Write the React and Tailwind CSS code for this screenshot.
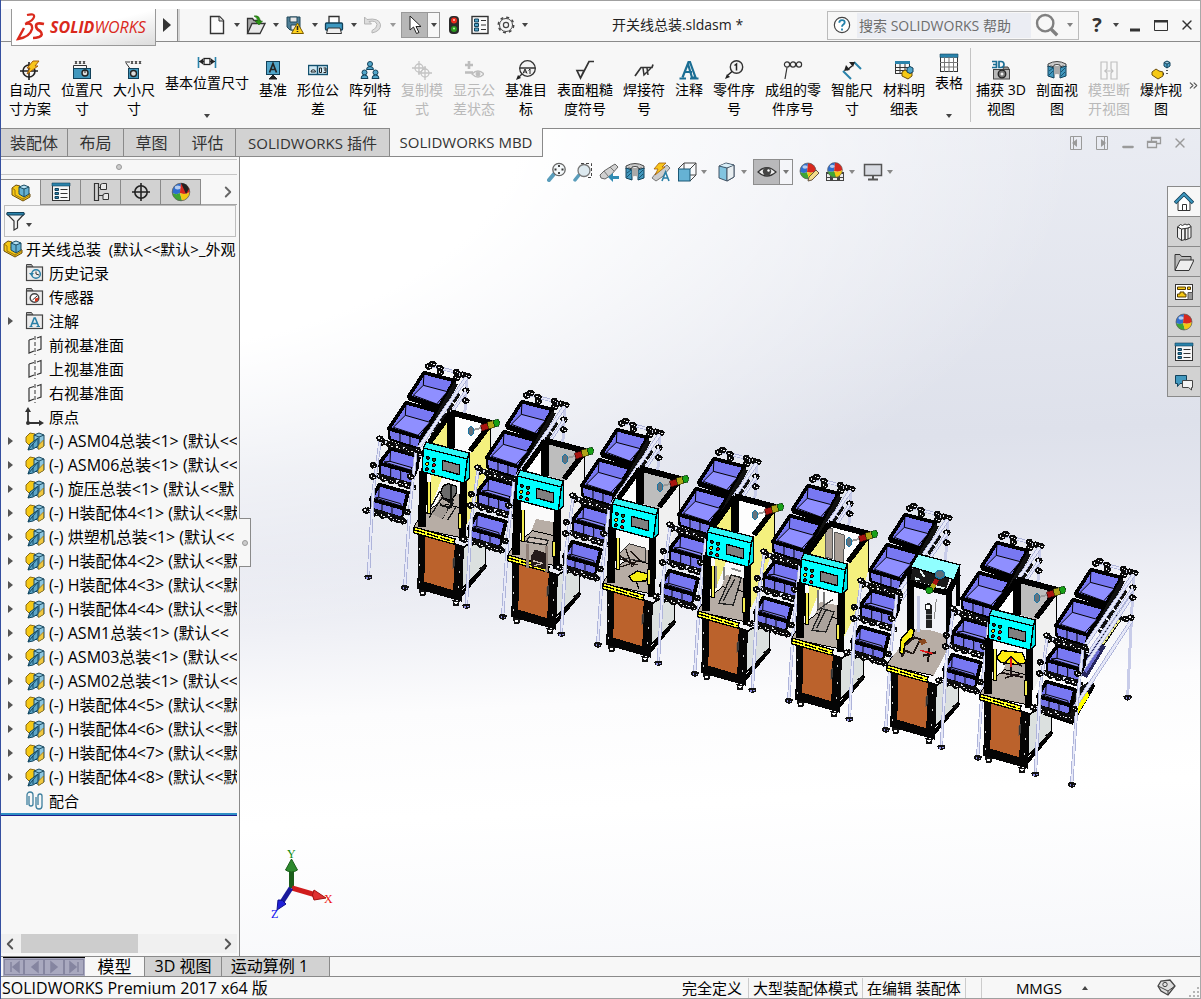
import { ChevronLeft, ChevronRight, ChevronsRight, Minus, X } from 'lucide-react';

const Svg = ({ children, className = 'size-5', box = '0 0 20 20' }) => (
    <svg viewBox={box} className={`shrink-0 ${className}`} fill="none" aria-hidden="true">
        {children}
    </svg>
);

const Caret = ({ className = 'text-[#444]' }) => (
    <svg viewBox="0 0 6 4" className={`h-1 w-1.5 shrink-0 ${className}`} aria-hidden="true">
        <path d="M0 0h6L3 4z" fill="currentColor" />
    </svg>
);

/* ---------- icons ---------- */

const Ball = ({ cx = 10, cy = 10, r = 8 }) => (
    <g transform={`translate(${cx} ${cy}) scale(${r / 8})`}>
        <path d="M0-8A8 8 0 0 0-8 1Q-4 3-1 1Z" fill="#2f6fd0" />
        <path d="M0-8A8 8 0 0 1 8 0Q4 3-1 1Z" fill="#d8281e" />
        <path d="M-8 1Q-4 3-1 1L1 8A8 8 0 0 1-8 1Z" fill="#3fa535" />
        <path d="M8 0Q4 3-1 1L1 8A8 8 0 0 0 8 0Z" fill="#f3c713" />
        <ellipse cx="-3" cy="-4" rx="2.6" ry="1.8" fill="#fff" opacity=".65" />
        <circle r="8" stroke="#5b5b5b" strokeWidth=".7" />
    </g>
);

const AssemblyIcon = ({ className }) => (
    <Svg className={className}>
        <path d="M1 5l4-3 4 1v4l-1 2 2 1 4-1 5 2v3l-7 4-11-6z" fill="#f6c915" stroke="#6b4d0c" />
        <path d="M1 5l3 2v5l8 4 7-4M12 16v2" stroke="#9b7410" />
        <path d="M8 4l5-2 5 2v7l-5 3-5-3z" fill="#64b1d3" stroke="#1c4a60" />
        <path d="M8 4l5 2 5-2M13 6v8" stroke="#1c4a60" />
        <path d="M9.500 4L13 2.700 16.500 4 13 5.300z" fill="#bfe3f1" />
    </Svg>
);

const ComponentIcon = () => (
    <Svg>
        <path d="M1 6l4-4 5 1 2 4-2 9-6-2-3-3z" fill="#f6c915" stroke="#8a6a14" />
        <path d="M9 4l5-2 5 2v11l-5 3-5-3z" fill="#8cc6df" stroke="#1c4a60" />
        <path d="M9 4l5 2 5-2M14 6v8" stroke="#1c4a60" />
        <path d="M18.500 9v6.500l-5 3-.500-4z" fill="#f0c840" stroke="#8a6a14" strokeWidth=".7" />
        <path d="M3 19l2-6 8-6v8l-5 3z" fill="#5fa8c9" stroke="#0f4560" />
        <path d="M3 19l9.500-11.500M8 13v4" stroke="#0f4560" />
    </Svg>
);

const ListIcon = () => (
    <Svg>
        <rect x="1.500" y="1.500" width="17" height="17" fill="#f7f7f7" stroke="#333" />
        <path d="M1 1h18v3H1z" fill="#2a83ab" stroke="#12415a" strokeWidth=".6" />
        <path d="M4 6.500h3.500v2H4zM4 10.500h3.500v2H4zM4 14.500h3.500v2H4z" fill="#2a83ab" stroke="#12415a" />
        <path d="M9.500 7.500h7M9.500 11.500h7M9.500 15.500h7" stroke="#333" />
    </Svg>
);

const FolderFrame = ({ children }) => (
    <Svg>
        <path d="M1.500 4V1.500h5L8 4z" fill="#b5b5b5" stroke="#444" />
        <rect x="1.500" y="4" width="16" height="13.500" fill="#ececec" stroke="#444" strokeWidth="1.200" />
        {children}
    </Svg>
);

const TreeIcon = {
    history: () => (
        <FolderFrame>
            <circle cx="11" cy="11" r="4.300" stroke="#2a7fa6" strokeWidth="1.500" />
            <path d="M11 8.500V11l3 1" stroke="#333" />
            <path d="M4 10h5l-2.500 3z" fill="#2a7fa6" />
        </FolderFrame>
    ),
    sensor: () => (
        <FolderFrame>
            <circle cx="9.500" cy="11" r="4.300" fill="#fff" stroke="#444" strokeWidth="1.400" />
            <path d="M10 11.500l3.500-1-.500 3-3 1.500z" fill="#d8361e" />
            <path d="M7.500 13L12 9" stroke="#333" />
        </FolderFrame>
    ),
    notes: () => (
        <FolderFrame>
            <path d="M6 15L9.200 7h1L13.500 15M7.500 12.500h4.500" stroke="#2a7fa6" strokeWidth="1.600" />
            <path d="M4.500 15.500h3M11.500 15.500H15" stroke="#2a7fa6" />
        </FolderFrame>
    ),
    plane: () => (
        <Svg>
            <path d="M4 5l5-1.500M12 3l4-1.500V14l-4 1.500M9 16l-5 2V5" stroke="#333" strokeWidth="1.200" />
            <path d="M10 1v19" stroke="#333" strokeDasharray="4 2" />
        </Svg>
    ),
    origin: () => (
        <Svg>
            <path d="M3 16V3M3 16h14" stroke="#333" strokeWidth="1.800" />
            <path d="M3 0l3 5H0zM19 16l-5-3v6z" fill="#333" />
            <circle cx="3" cy="16" r="2" fill="#333" />
        </Svg>
    ),
    mates: () => (
        <Svg>
            <path d="M2 14V4a3 3 0 0 1 6 0v9a2 2 0 0 1-4 0V5" stroke="#3d7f9e" strokeWidth="1.300" />
            <path d="M11 6v9a3 3 0 0 0 6 0V5a2 2 0 0 0-4 0v9" stroke="#3d7f9e" strokeWidth="1.300" />
        </Svg>
    ),
    part: ComponentIcon,
};

const Target = ({ color = '#222' }) => (
    <g stroke={color} strokeWidth="1.600">
        <circle cx="10" cy="10" r="6.200" />
        <path d="M10 1v18M1 10h18" />
    </g>
);

const SectionIcon = () => (
    <Svg>
        <path d="M1 4q9-5 18 0v3q-3-2-6 0V5Q10 4 7 5v2Q4 5 1 7z" fill="#c9c9c9" stroke="#444" />
        <path d="M1 6l6 2v10l-6-2zM13 8l6-2v10l-6 2z" fill="#4298be" stroke="#12415a" />
        <path d="M2 11l4-3M2 15l4-4M14 12l4-4M14 16l4-4" stroke="#12415a" strokeWidth=".8" />
        <path d="M7 6h6v9q-3-2-6 0z" fill="#aaa" />
    </Svg>
);

const ribbonIcons = {
    auto: (
        <>
            <circle cx="9" cy="11" r="6" stroke="#222" strokeWidth="1.600" />
            <path d="M9 2v18M0 11h18" stroke="#222" strokeWidth="1.600" />
            <path d="M13 1h6l-4 5h3L7 14l3-6H7z" fill="#f8c51c" stroke="#a55d0a" />
        </>
    ),
    pos: (
        <>
            <path d="M3 1l2 3M5 1L3 4M7 1l2 3M9 1L7 4M11 1l2 3M13 1l-2 3" stroke="#333" />
            <path d="M1.500 8V5.500h13V11" stroke="#333" />
            <rect x="1.500" y="8.500" width="17" height="10" fill="#4298be" stroke="#12415a" />
            <circle cx="13" cy="13" r="3" fill="#ddd" stroke="#222" strokeWidth="1.400" />
            <path d="M13 10v3" stroke="#222" />
        </>
    ),
    size: (
        <>
            <path d="M7 1l2 3M9 1L7 4M11 1l2 3M13 1l-2 3M15 1l2 3M17 1l-2 3" stroke="#333" />
            <path d="M2 3l5 7M1 2h5" stroke="#333" />
            <rect x="4.500" y="8.500" width="10" height="10" fill="#4298be" stroke="#12415a" />
            <circle cx="9.500" cy="13.500" r="3" fill="#ddd" stroke="#222" strokeWidth="1.400" />
        </>
    ),
    basic: (
        <>
            <path d="M1.500 4v11M18.500 4v11" stroke="#2a83ab" strokeWidth="1.600" />
            <path d="M2 8.500h16" stroke="#222" />
            <path d="M2 8.500l4-3v6zM18 8.500l-4-3v6z" fill="#222" />
            <rect x="7" y="5.500" width="6" height="6" fill="#f7f7f7" stroke="#222" strokeWidth="1.300" />
        </>
    ),
    datum: (
        <>
            <rect x="3.500" y="1.500" width="13" height="13" fill="#52a6ca" stroke="#12415a" />
            <path d="M6.500 12.500l3.500-9 3.500 9M8 9.500h4" stroke="#222" strokeWidth="1.700" />
            <path d="M10 15v2M6 19h8l-4-4z" fill="#222" stroke="#222" />
        </>
    ),
    tol: (
        <>
            <rect x=".5" y="5.500" width="19" height="9" fill="#cfe8f3" stroke="#12506e" strokeWidth="1.400" />
            <path d="M9.500 5.500v9" stroke="#12506e" strokeWidth="1.400" />
            <path d="M3 12h4.500a2.200 2.200 0 0 0-4.500 0z" stroke="#222" />
            <path d="M11.500 8v4.500h2V8zM15.500 8H18v4.500h-2.500M16 10h2" stroke="#222" />
        </>
    ),
    pattern: (
        <g fill="#52a6ca" stroke="#12415a">
            <circle cx="10" cy="4" r="2.500" />
            <path d="M6.500 9.500q0-3 3.500-3t3.500 3z" />
            <circle cx="4.500" cy="12.500" r="2.500" />
            <path d="M1 18.500q0-3.500 3.500-3.500T8 18.500z" />
            <circle cx="15.500" cy="12.500" r="2.500" />
            <path d="M12 18.500q0-3.500 3.500-3.500t3.500 3.500z" />
        </g>
    ),
    scheme: (
        <g stroke="#c4c4c4" strokeWidth="1.300">
            <circle cx="7" cy="8" r="4" />
            <path d="M7 1v14M0 8h14" />
            <circle cx="13" cy="13" r="4" />
            <path d="M13 6v14M6 13h14" />
        </g>
    ),
    status: (
        <g stroke="#bdbdbd">
            <path d="M5 1v8M1 5h8M1 12.500h8" strokeWidth="2.600" />
            <path d="M8 14q6-6 12 0-6 6-12 0z" strokeWidth="1.300" />
            <circle cx="14" cy="14" r="2" fill="#bdbdbd" />
        </g>
    ),
    target: (
        <>
            <circle cx="11.500" cy="8.500" r="7.800" fill="#f2f2f2" stroke="#333" strokeWidth="1.300" />
            <path d="M3.500 8h16M6 14l-4 4" stroke="#333" strokeWidth="1.400" />
            <path d="M7 13.500l2-4.500 2 4.500M8 12h2.400M12.500 10.500L14 9v5" stroke="#222" />
            <path d="M0 20l2-5 3 3z" fill="#222" />
        </>
    ),
    rough: <path d="M2 10.500h7L5.500 18zM5.500 18L14 1.500h5" stroke="#333" strokeWidth="1.700" />,
    weld: (
        <>
            <path d="M1 16L7 7.500h11L19 4.500" stroke="#333" strokeWidth="1.700" />
            <path d="M9 8l1 7 7-7M13 8l1 7" stroke="#333" strokeWidth="1.500" />
        </>
    ),
    note: (
        <>
            <path d="M3.500 17.500L9.500 2h1.500l5.500 15.500h-3.500L9 4M6 12h7" stroke="#1b6e94" strokeWidth="2.200" />
            <path d="M.500 18.500h6.500M11 18.500h8.500" stroke="#1b6e94" strokeWidth="2" />
        </>
    ),
    balloon: (
        <>
            <circle cx="12.500" cy="7" r="6.200" fill="#f2f2f2" stroke="#333" strokeWidth="1.400" />
            <path d="M10.500 5.500l2-1.500v6.500M8 11.500L4 15" stroke="#222" strokeWidth="1.500" />
            <path d="M1 19l2-5 3 3z" fill="#222" />
        </>
    ),
    stacked: (
        <g stroke="#333" strokeWidth="1.200">
            <circle cx="4" cy="4.500" r="2.600" />
            <circle cx="10" cy="4.500" r="2.600" />
            <circle cx="16" cy="4.500" r="2.600" />
            <path d="M4 7.500L2 19" />
        </g>
    ),
    smart: (
        <>
            <path d="M12 2l7 7M1 11l8 8" stroke="#2a83ab" strokeWidth="2" />
            <path d="M5 10l5-4" stroke="#222" strokeWidth="1.600" />
            <path d="M2 11l2-6 4 5zM13 2L7 2l4 5z" fill="#222" />
        </>
    ),
    bom: (
        <>
            <rect x="1.500" y="1.500" width="14" height="12" fill="#f7f7f7" stroke="#333" />
            <path d="M1 1h15v3H1z" fill="#2a83ab" />
            <path d="M1 7.500h14M1 10.500h14M6 4v9M11 4v9" stroke="#333" />
            <path d="M8 12l3-2 7 3v3l-4 3-6-3z" fill="#f6c915" stroke="#6b4d0c" />
            <path d="M13 8l3-1.500L19 8v4l-3 1.500-3-1.500z" fill="#52a6ca" stroke="#12415a" />
        </>
    ),
    table: (
        <>
            <rect x="1.500" y="1.500" width="17" height="17" fill="#fff" stroke="#333" />
            <path d="M1 1h18v3.500H1z" fill="#2a83ab" stroke="#12415a" strokeWidth=".6" />
            <path d="M1 9.500h18M1 14h18M5.500 4v15M10 4v15M14.500 4v15" stroke="#777" />
        </>
    ),
    capture: (
        <>
            <path d="M1 1.500h4.500v6H1M2 4.500h3.500M8 1.500h2q3 0 3 3t-3 3H8z" stroke="#1b6e94" strokeWidth="1.700" />
            <rect x="2.500" y="9.500" width="16" height="9.500" fill="#b9b9b9" stroke="#444" />
            <path d="M12 9l1-2h4l1 2" fill="#999" stroke="#444" />
            <circle cx="11" cy="14" r="3.800" fill="#777" stroke="#222" strokeWidth="1.300" />
            <circle cx="11" cy="14" r="1.500" fill="#eee" />
        </>
    ),
    broken: (
        <path d="M2 2h6v7l-2 2 2 2v6H2zM18 2h-6v7l2 2-2 2v6h6zM5 11h9" stroke="#c0c0c0" strokeWidth="1.200" />
    ),
    explode: (
        <>
            <path d="M1 12l4-3 3 2 4 1v4l-5 3-6-4z" fill="#f6c915" stroke="#6b4d0c" />
            <path d="M13 2.500l3-1.500 3 1.500V6l-3 2-3-2zM13 2.500L16 4l3-1.500M16 4v4" fill="#52a6ca" stroke="#12415a" />
            <path d="M16 10v1M16 13v1M13 14h-1" stroke="#222" strokeWidth="1.500" />
        </>
    ),
};

/* ---------- data ---------- */

const ribbonLeft = [
    { icon: 'auto', lines: ['自动尺', '寸方案'], w: 'w-[52px]' },
    { icon: 'pos', lines: ['位置尺', '寸'], w: 'w-[52px]' },
    { icon: 'size', lines: ['大小尺', '寸'], w: 'w-[52px]' },
    { icon: 'basic', lines: ['基本位置尺寸'], w: 'w-[94px]', menu: true },
    { icon: 'datum', lines: ['基准'], w: 'w-[38px]' },
    { icon: 'tol', lines: ['形位公', '差'], w: 'w-[52px]' },
    { icon: 'pattern', lines: ['阵列特', '征'], w: 'w-[52px]' },
    { icon: 'scheme', lines: ['复制模', '式'], w: 'w-[52px]', off: true },
    { icon: 'status', lines: ['显示公', '差状态'], w: 'w-[52px]', off: true },
    { icon: 'target', lines: ['基准目', '标'], w: 'w-[52px]' },
    { icon: 'rough', lines: ['表面粗糙', '度符号'], w: 'w-[66px]' },
    { icon: 'weld', lines: ['焊接符', '号'], w: 'w-[52px]' },
    { icon: 'note', lines: ['注释'], w: 'w-[38px]' },
    { icon: 'balloon', lines: ['零件序', '号'], w: 'w-[52px]' },
    { icon: 'stacked', lines: ['成组的零', '件序号'], w: 'w-[66px]' },
    { icon: 'smart', lines: ['智能尺', '寸'], w: 'w-[52px]' },
    { icon: 'bom', lines: ['材料明', '细表'], w: 'w-[52px]' },
    { icon: 'table', lines: ['表格'], w: 'w-[38px]', menu: true },
];

const ribbonRight = [
    { icon: 'capture', lines: ['捕获 3D', '视图'], w: 'w-[60px]' },
    { icon: 'section', lines: ['剖面视', '图'], w: 'w-[52px]' },
    { icon: 'broken', lines: ['模型断', '开视图'], w: 'w-[52px]', off: true },
    { icon: 'explode', lines: ['爆炸视', '图'], w: 'w-[52px]' },
];

const treeTop = [
    { icon: 'history', label: '历史记录' },
    { icon: 'sensor', label: '传感器' },
    { icon: 'notes', label: '注解', open: true },
    { icon: 'plane', label: '前视基准面' },
    { icon: 'plane', label: '上视基准面' },
    { icon: 'plane', label: '右视基准面' },
    { icon: 'origin', label: '原点' },
];

const parts = [
    { name: 'ASM04总装<1>', state: '(默认<<' },
    { name: 'ASM06总装<1>', state: '(默认<<' },
    { name: '旋压总装<1>', state: '(默认<<默' },
    { name: 'H装配体4<1>', state: '(默认<<默' },
    { name: '烘塑机总装<1>', state: '(默认<<' },
    { name: 'H装配体4<2>', state: '(默认<<默' },
    { name: 'H装配体4<3>', state: '(默认<<默' },
    { name: 'H装配体4<4>', state: '(默认<<默' },
    { name: 'ASM1总装<1>', state: '(默认<<' },
    { name: 'ASM03总装<1>', state: '(默认<<' },
    { name: 'ASM02总装<1>', state: '(默认<<' },
    { name: 'H装配体4<5>', state: '(默认<<默' },
    { name: 'H装配体4<6>', state: '(默认<<默' },
    { name: 'H装配体4<7>', state: '(默认<<默' },
    { name: 'H装配体4<8>', state: '(默认<<默' },
];

/* ---------- title bar ---------- */

const Logo = () => (
    <div className="relative z-10 ml-[10px] flex h-[37px] w-[145px] items-center self-start border border-t-0 border-[#999] bg-linear-to-br from-white via-white to-[#dcdcdc] pl-1">
        <svg viewBox="0 0 32 28" className="h-7 w-8 shrink-0" fill="none" stroke="#da291c" aria-hidden="true">
            <path d="M11 2q8-2 7 2-1 4-8 6" strokeWidth="2.200" />
            <path d="M9 11q8-2 7 5-2 8-14 10L8 15" strokeWidth="2.400" />
            <path d="M28 11q-8-2-8 2 0 3 4 5 4 4-1 6-3 1-6 1" strokeWidth="2.600" />
        </svg>
        <span className="ml-0.5 text-[16px] italic leading-6 text-[#da291c]">
            <b>SOLID</b>WORKS
        </span>
    </div>
);

const MenuTool = ({ label, children, off }) => (
    <div className="flex items-center">
        <button type="button" aria-label={label} className="p-px">
            {children}
        </button>
        <button type="button" aria-label={`${label} 选项`} className="flex w-[17px] justify-center">
            <Caret className={off ? 'text-[#999]' : 'text-[#444]'} />
        </button>
    </div>
);

const TitleBar = () => (
    <header className="border-t border-[#a0a0a0] bg-[#f7f7f7]">
        <div className="h-2 bg-white" />
        <div className="flex h-[33px] items-center border-b border-[#8a8a8a]">
            <Logo />
            <button type="button" aria-label="展开菜单" className="ml-1.5 p-px">
                <Svg className="h-3.5 w-2" box="0 0 8 14">
                    <path d="M0 0l8 7-8 7z" fill="#333" />
                </Svg>
            </button>
            <div className="ml-[5px] h-full w-[3px] border-l border-[#8a8a8a] bg-[#d6d6d6]" />

            <div className="ml-[26px] flex items-center">
                <MenuTool label="新建">
                    <Svg>
                        <path d="M3.500 1.500h9l4 4v13h-13z" fill="#fbfbfb" stroke="#333" strokeWidth="1.400" />
                        <path d="M12 1.500V6h4.500" fill="#ddd" stroke="#333" />
                    </Svg>
                </MenuTool>
                <MenuTool label="打开">
                    <Svg>
                        <path d="M1.500 18V3.500h5L8 5.500h6V9" fill="#aaa" stroke="#333" strokeWidth="1.300" />
                        <path d="M1.500 18.500L6 8.500h13l-5 10z" fill="#e9e9e9" stroke="#333" strokeWidth="1.300" />
                        <path d="M8 1q6-1 6 5h2.500L13 10 9 6h2.500Q12 3 8 1z" fill="#2b9413" stroke="#1c6a0b" strokeWidth=".6" />
                    </Svg>
                </MenuTool>
                <MenuTool label="保存">
                    <Svg>
                        <path d="M2 2h13v13H5l-3-3z" fill="#4e7f97" stroke="#22485a" />
                        <path d="M5 2h7v5H5zM6 10h6v5H6z" fill="#e8e8e8" stroke="#22485a" />
                        <path d="M12.500 8l6 10.500h-12z" fill="#ffd21e" stroke="#7a5b00" />
                        <path d="M12.500 11v4M12.500 16v1" stroke="#222" strokeWidth="1.600" />
                    </Svg>
                </MenuTool>
                <MenuTool label="打印">
                    <Svg>
                        <path d="M5 8V1.500h10V8" fill="#fff" stroke="#333" strokeWidth="1.300" />
                        <rect x="1.500" y="8" width="17" height="7" rx="1" fill="#3d98c0" stroke="#12415a" strokeWidth="1.300" />
                        <path d="M4 13h12l1.500 5.500h-15z" fill="#eee" stroke="#333" />
                    </Svg>
                </MenuTool>
                <MenuTool label="撤消" off>
                    <Svg>
                        <path d="M1.500 2v7h7L6 6.500q7-1.500 8 3 0 4-5 6v2.500Q18 16 17.500 9.500 16 2.500 4 4.500z" fill="#ddd" stroke="#b5b5b5" />
                    </Svg>
                </MenuTool>
            </div>

            <div className="flex h-[26px] border border-[#999]">
                <button type="button" aria-label="选择" className="flex w-[25px] items-center justify-center bg-[#b7b7b7]">
                    <Svg>
                        <path d="M5 1v14l3.500-3 3 6.500 2.500-1-3-6h5z" fill="#fff" stroke="#222" />
                    </Svg>
                </button>
                <button type="button" aria-label="选择 选项" className="flex w-3 items-center justify-center border-l border-[#999]">
                    <Caret />
                </button>
            </div>
            <div className="ml-1 flex items-center gap-[6px]">
                <button type="button" aria-label="重建模型">
                    <Svg>
                        <rect x="5" y="1" width="10" height="18" rx="4" fill="#2b2b2b" />
                        <circle cx="10" cy="5.500" r="3" fill="#ee2b1c" />
                        <circle cx="10" cy="14" r="3" fill="#2a9a1e" />
                        <circle cx="10" cy="5" r="1" fill="#ffd0c8" />
                        <circle cx="10" cy="13.500" r="1" fill="#c4f3b8" />
                    </Svg>
                </button>
                <button type="button" aria-label="文件属性">
                    <Svg>
                        <rect x="2" y="1.500" width="16" height="17" fill="#fafafa" stroke="#333" strokeWidth="1.400" />
                        <path d="M4.500 4h4v3h-4zM4.500 8.500h4v3h-4zM4.500 13h4v3h-4z" fill="#52a6ca" stroke="#12415a" />
                        <path d="M11 5.500h5M11 10h5M11 14.500h5" stroke="#333" />
                    </Svg>
                </button>
                <button type="button" aria-label="设置">
                    <Svg>
                        <circle cx="10" cy="10" r="7.700" stroke="#444" strokeWidth="1.500" strokeDasharray="3 3.050" />
                        <circle cx="10" cy="10" r="6.500" stroke="#444" strokeWidth="1" />
                        <circle cx="10" cy="10" r="2.600" stroke="#444" strokeWidth="1.200" />
                    </Svg>
                </button>
                <Caret />
            </div>

            <h1 className="flex-1 text-center text-[14px] leading-5 text-[#222]">开关线总装.sldasm *</h1>

            <label className="flex h-[29px] w-[252px] items-center border border-[#bbb]">
                <Svg className="ml-[5px] mr-[6px] size-[18px]">
                    <circle cx="10" cy="10" r="8.500" fill="#fff" stroke="#444" strokeWidth="1.300" />
                    <path d="M7 7.500q0-3 3-3t3 2.500q0 1.500-1.500 2.500T10 12M10 14v2" stroke="#2280aa" strokeWidth="2" />
                </Svg>
                <input
                    aria-label="搜索帮助"
                    placeholder="搜索 SOLIDWORKS 帮助"
                    className="h-[25px] w-[174px] bg-[#ebedf3] px-0.5 text-[14px] placeholder:text-[#6d6d6d]"
                />
                <Svg className="ml-1 size-6">
                    <circle cx="8.500" cy="8.500" r="6.800" stroke="#808080" strokeWidth="2" />
                    <path d="M13.500 13.500l5 5" stroke="#808080" strokeWidth="2.800" />
                </Svg>
                <span className="ml-2">
                    <Caret className="text-[#808080]" />
                </span>
            </label>

            <div className="ml-2 mr-[5px] flex items-center text-[#333]">
                <button type="button" className="w-5 text-[20px] font-bold leading-6">?</button>
                <span className="mx-[6px]">
                    <Caret />
                </span>
                <button type="button" aria-label="最小化" className="ml-0.5">
                    <Svg className="size-4" box="0 0 16 16">
                        <path d="M3 13h10" stroke="#333" strokeWidth="3" />
                    </Svg>
                </button>
                <button type="button" aria-label="最大化" className="ml-2.5">
                    <Svg className="size-4" box="0 0 16 16">
                        <path d="M1.500 3.500h13v10h-13z" stroke="#333" />
                        <path d="M1 3h14v2.500H1z" fill="#333" />
                    </Svg>
                </button>
                <button type="button" aria-label="关闭" className="ml-2.5">
                    <X className="size-4" strokeWidth={2} />
                </button>
            </div>
        </div>
    </header>
);

/* ---------- ribbon ---------- */

const RibbonButton = ({ icon, lines, w, menu, off }) => (
    <button
        type="button"
        disabled={off}
        className={`flex h-full shrink-0 flex-col items-center text-[14px] leading-[19px] ${w} ${menu ? 'pt-[11px]' : 'pt-[18px]'} ${off ? 'text-[#b9b9b9]' : 'text-black'}`}
    >
        {icon === 'section' ? <SectionIcon /> : <Svg>{ribbonIcons[icon]}</Svg>}
        {lines.map((line) => (
            <span key={line} className="whitespace-nowrap">
                {line}
            </span>
        ))}
        {menu && (
            <span className="mt-auto pb-[10px]">
                <Caret />
            </span>
        )}
    </button>
);

const Ribbon = () => (
    <div className="flex h-[86px] overflow-hidden bg-[#f7f7f7] pl-[3px]">
        {ribbonLeft.map((item) => (
            <RibbonButton key={item.icon} {...item} />
        ))}
        <div className="my-1.5 ml-0.5 w-px shrink-0 bg-[#c4c4c4]" />
        {ribbonRight.map((item) => (
            <RibbonButton key={item.icon} {...item} />
        ))}
        <button type="button" aria-label="更多命令" className="shrink-0 text-[#555]">
            <ChevronsRight className="size-[13px]" />
        </button>
    </div>
);

const TabRow = () => (
    <nav className="flex h-[29px] text-[15px] leading-6 text-[#333]">
        {['装配体', '布局', '草图', '评估'].map((tab, i) => (
            <button
                key={tab}
                type="button"
                className={`whitespace-nowrap border-y border-r border-[#8a8a8a] bg-[#d2d2d2] text-[16px] ${i === 0 ? 'w-[67px]' : 'w-14'}`}
            >
                {tab}
            </button>
        ))}
        <button type="button" className="w-[154px] whitespace-nowrap border-y border-r border-[#8a8a8a] bg-[#d2d2d2]">
            SOLIDWORKS 插件
        </button>
        <button type="button" className="w-[153px] whitespace-nowrap border-b border-r border-[#8a8a8a] bg-[#f7f7f7]">
            SOLIDWORKS MBD
        </button>
        <div className="flex flex-1 items-center justify-end gap-2.5 border-t border-[#8a8a8a] pr-3 text-[#9a9a9a]">
            <button type="button" aria-label="上一窗口">
                <Svg className="size-4" box="0 0 16 16">
                    <path d="M2.500 1.500h11v13h-11zM5.500 1.500v13" stroke="currentColor" />
                    <path d="M4 8l5-4v8z" fill="currentColor" />
                </Svg>
            </button>
            <button type="button" aria-label="下一窗口">
                <Svg className="size-4" box="0 0 16 16">
                    <path d="M2.500 1.500h11v13h-11zM10.500 1.500v13" stroke="currentColor" />
                    <path d="M12 8L7 4v8z" fill="currentColor" />
                </Svg>
            </button>
            <button type="button" aria-label="最小化文档" className="pt-2">
                <Minus className="size-4" strokeWidth={3.5} />
            </button>
            <button type="button" aria-label="还原文档">
                <Svg className="size-4" box="0 0 16 16">
                    <path d="M5.500 6V2.500h9v6H11M1.500 6.500h9v6h-9z" stroke="currentColor" strokeWidth="1.300" />
                    <path d="M5 3h10M1 7h10" stroke="currentColor" strokeWidth="2" />
                </Svg>
            </button>
            <button type="button" aria-label="关闭文档">
                <X className="size-4" strokeWidth={2} />
            </button>
        </div>
    </nav>
);

/* ---------- feature tree ---------- */

const TreeRow = ({ icon, label, open, wide }) => {
    const Icon = TreeIcon[icon];
    return (
        <li className="flex h-6 items-center whitespace-nowrap pl-[7px]">
            <button type="button" aria-label="展开" className={`w-[17px] shrink-0 ${open ? '' : 'invisible'}`}>
                <Svg className="h-2 w-[5px]" box="0 0 5 8">
                    <path d="M0 0l5 4-5 4z" fill="#555" />
                </Svg>
            </button>
            <Icon />
            <span className={`ml-1 text-black ${wide ? 'text-[16px]' : 'text-[15px]'}`}>{label}</span>
        </li>
    );
};

const panelTabs = [
    { id: 'tree', icon: <AssemblyIcon /> },
    { id: 'props', icon: <ListIcon /> },
    {
        id: 'config',
        icon: (
            <Svg>
                <path d="M3.500 1.500h4v17h-4zM7.500 5.500h4M7.500 13.500h5" stroke="#333" strokeWidth="1.200" />
                <path d="M9.500 2.500l2-1h4v6h-6zM12 12.500l2-1h3.500v6H12z" fill="#e8e8e8" stroke="#333" />
            </Svg>
        ),
    },
    {
        id: 'dim',
        icon: (
            <Svg>
                <Target />
            </Svg>
        ),
    },
    {
        id: 'display',
        icon: (
            <Svg>
                <Ball r={8.8} />
                <path d="M10 1q6 0 8 6l-3 5z" fill="#222" />
            </Svg>
        ),
    },
];

const FeatureTree = () => (
    <aside className="relative flex w-[239px] shrink-0 flex-col border-r border-[#8a8a8a] bg-[#f7f7f7]">
        <div className="mr-[2px] mt-[2px] flex h-4 items-center justify-center border-y border-[#c6c6c6]">
            <span className="size-[6px] rounded-full border border-[#999] bg-[#ccc]" />
        </div>
        <div className="mr-[2px] mt-1 flex h-[26px]">
            {panelTabs.map((tab, i) => (
                <button
                    key={tab.id}
                    type="button"
                    aria-label={tab.id}
                    className={`flex w-10 items-center justify-center border-r border-t border-[#8a8a8a] ${i === 0 ? '' : 'border-b bg-[#d2d2d2]'}`}
                >
                    {tab.icon}
                </button>
            ))}
            <button type="button" aria-label="更多" className="flex flex-1 items-center justify-end border-b border-[#a5a5a5] text-[#666]">
                <ChevronRight className="size-[18px]" strokeWidth={2.5} />
            </button>
        </div>
        <div className="mx-[3px] flex h-8 items-center border border-[#bdbdbd] pl-px">
            <button type="button" aria-label="过滤" className="flex items-end">
                <Svg>
                    <path d="M1 3h17l-6.500 7v7L8 19v-9z" fill="#f3f3f3" stroke="#333" strokeWidth="1.200" />
                    <path d="M1 1.500h17V4H1z" fill="#2a83ab" stroke="#12415a" />
                </Svg>
                <span className="pb-1">
                    <Caret />
                </span>
            </button>
        </div>

        <div className="mr-[2px] overflow-hidden">
            <div className="flex h-6 items-center gap-[3px] whitespace-pre pl-[2px] text-[15px] text-black">
                <AssemblyIcon />
                开关线总装  (默认&lt;&lt;默认&gt;_外观
            </div>
            <ul>
                {treeTop.map((row) => (
                    <TreeRow key={row.label} {...row} />
                ))}
                {parts.map(({ name, state }) => (
                    <TreeRow key={name} icon="part" label={`(-) ${name} ${state}`} open wide />
                ))}
                <TreeRow icon="mates" label="配合" />
            </ul>
            <div className="h-[3px] border-b border-[#1c1c8c] bg-[#2f8fc5]" />
        </div>

        <div className="mb-[3px] mr-[2px] mt-auto flex h-[19px] items-center bg-[#f0f0f0] text-[#555]">
            <ChevronLeft className="size-[18px]" strokeWidth={2.5} />
            <div className="ml-[2px] h-full w-[117px] bg-[#cdcdcd]" />
            <ChevronRight className="ml-auto size-[18px]" strokeWidth={2.5} />
        </div>

        <button
            type="button"
            aria-label="收起面板"
            className="absolute -right-3 top-[361px] z-10 flex h-[49px] w-3 items-center justify-center border border-l-0 border-[#8a8a8a] bg-[#f7f7f7]"
        >
            <span className="size-[6px] rounded-full border border-[#999] bg-[#ccc]" />
        </button>
    </aside>
);

/* ---------- model drawing ---------- */

// Both shapes are drawn at three times their size on screen.
const place = ([x, y]) => `translate(${360 + x} ${350 + y}) scale(.3333)`;

const rackSpots = [[0, 0], [98, 29], [193, 57], [290, 86], [384, 113], [481, 142], [573, 170], [667, 197]];
const stationSpots = [[0, 1], [94, 29], [189, 57], [284, 85], [378, 112], [473, 139], [566, 168]];

const Knob = ({ x, y }) => (
    <g>
        <path d={`M${x - 11} ${y - 6}l8-4 10 2 5 7-4 9-10 2-8-5z`} fill="#0a0a0a" />
        <path d={`M${x - 5} ${y - 4}h4v4h-4zM${x + 2} ${y + 1}h4v3h-4z`} fill="#f4f4f4" />
    </g>
);

const Foot = ({ x, y }) => (
    <g>
        <path d={`M${x - 13} ${y - 4}l7-4h12l7 4-3 8-10 5-10-5z`} fill="#111" />
        <path d={`M${x - 6} ${y - 2}h4v6h-4zM${x + 3} ${y - 1}h4v4h-4z`} fill="#8c8ce0" />
    </g>
);

const Rail = ({ d, w = 12 }) => (
    <>
        <path d={d} stroke="#aeb4da" strokeWidth={w} />
        <path d={d} stroke="#e6e8f8" strokeWidth={w - 5} />
    </>
);

// rim corners clockwise from the back left; drop is the height of the front face
const Crate = ({ a, b, c, d, drop }) => {
    const f = [a[0] - 2, a[1] + 38];
    const g = [b[0] - 22, b[1] + 33];
    return (
        <g stroke="#000" strokeLinejoin="round">
            <path d={`M${d} L${d[0] + 3} ${d[1] + drop} L${c[0] - 6} ${c[1] + drop} L${c}Z`} fill="#7474e8" strokeWidth="7" />
            <path d={`M${c} L${c[0] - 6} ${c[1] + drop} L${b[0] - 4} ${b[1] + drop} L${b}Z`} fill="#111" strokeWidth="5" />
            <path d={`M${a} L${b} L${c} L${d}Z`} fill="#7878f2" strokeWidth="11" />
            <path d={`M${f} L${g} L${c[0] - 8} ${c[1] - 8} L${d[0] + 14} ${d[1] - 4}Z`} fill="#8f8fff" strokeWidth="3" />
            <path d={`M${a} L${f}`} strokeWidth="3" />
            <path d={`M${d[0] + 34} ${d[1] + 10}v${drop}M${d[0] + 64} ${d[1] + 18}v${drop}`} strokeWidth="3" />
        </g>
    );
};

const Roller = ({ x, y, len = 120 }) => (
    <g>
        <path d={`M${x} ${y}l${len} ${len * 0.29}`} stroke="#111" strokeWidth="16" />
        <path d={`M${x} ${y}l${len} ${len * 0.29}`} stroke="#e4e6f6" strokeWidth="8" strokeDasharray="16 7" />
        {[0, 0.25, 0.45, 0.7, 0.85, 1].map((t) => (
            <Knob key={t} x={Math.round(x + len * t)} y={Math.round(y + len * t * 0.29) + 4} />
        ))}
    </g>
);

const topKnobs = [[206, 50], [218, 42], [240, 54], [241, 68], [289, 66], [290, 84], [310, 74], [323, 78], [318, 122], [317, 152]];

const Rack = ({ at, last }) => (
    <g transform={place(at)}>
        <path d="M320 78L302 450" stroke="#c8cce9" strokeWidth="9" />
        {last && (
            <>
                <path d="M50 500L135 528 200 418 190 400" fill="#111" stroke="#000" strokeWidth="8" />
                <path d="M142 484l38-52 7 14-38 60z" fill="#ffff00" />
                <path d="M280 205L215 300" stroke="#111" strokeWidth="22" />
                <path d="M276 218L225 290" stroke="#f1f08a" strokeWidth="10" strokeDasharray="12 3" />
                <path d="M222 290L165 385" stroke="#26265c" strokeWidth="34" />
                <path d="M216 310L175 375" stroke="#6a6ad0" strokeWidth="9" />
                <Foot x={302} y={452} />
                <Rail d="M314 220L138 488" />
                <Rail d="M312 152L158 380" />
                <Knob x={312} y={212} />
                <Knob x={296} y={216} />
            </>
        )}
        <Rail d="M212 46L322 76" w={10} />
        <path d="M296 130L215 255" stroke="#111" strokeWidth="14" strokeDasharray="30 5" />
        {topKnobs.map(([x, y]) => (
            <Knob key={`${x}-${y}`} x={x} y={y} />
        ))}
        <Crate a={[58, 404]} b={[144, 428]} c={[132, 476]} d={[32, 448]} drop={28} />
        <Crate a={[92, 296]} b={[178, 320]} c={[160, 368]} d={[58, 340]} drop={34} />
        <path d="M215 130L180 260" stroke="#111" strokeWidth="14" />
        <Crate a={[138, 158]} b={[232, 184]} c={[182, 264]} d={[86, 236]} drop={32} />
        <Crate a={[192, 68]} b={[284, 92]} c={[238, 170]} d={[146, 140]} drop={8} />
        <path d="M288 100L230 205" stroke="#111" strokeWidth="14" />
        <Rail d="M320 82L168 306" />
        <Rail d="M318 124L182 322" w={10} />
        <Roller x={64} y={274} len={112} />
        <Roller x={42} y={374} len={116} />
        <Roller x={18} y={478} len={112} />
        <Rail d="M60 275L40 420 25 680" w={10} />
        <Rail d="M168 304L150 470 134 712" w={10} />
        <Knob x={40} y={346} />
        <Knob x={60} y={266} />
        <Knob x={38} y={380} />
        <Knob x={152} y={380} />
        <Knob x={142} y={486} />
        <Knob x={172} y={300} />
        <Foot x={25} y={682} />
        <Foot x={134} y={714} />
    </g>
);

const Lamp = () => (
    <g>
        <path d="M336 238l32-8" stroke="#999" strokeWidth="6" />
        <ellipse cx="333" cy="240" rx="7" ry="14" fill="#66727c" stroke="#1878a8" strokeWidth="3" />
        <path d="M362 222l20-6 4 18-20 6z" fill="#a81410" stroke="#300" strokeWidth="2" />
        <path d="M382 214l18-5 4 20-18 5z" fill="#b0a418" stroke="#330" strokeWidth="2" />
        <path d="M400 208l14-3 6 8-4 12-12 3z" fill="#18a018" stroke="#030" strokeWidth="2" />
    </g>
);

const Cabinet = () => (
    <g>
        <path d="M308 590L378 550 376 645 306 712Z" fill="#dbe0df" stroke="#000" strokeWidth="5" />
        <path d="M298 738L378 642" stroke="#000" strokeWidth="12" />
        <path d="M175 545L312 585 306 752 172 714Z" fill="#050505" />
        <path d="M196 555L284 582 280 718 193 692Z" fill="#bb622c" />
        <path d="M278 625l6-8v28l-6 8z" fill="#333" stroke="#555" strokeWidth="1" />
        <path d="M180 590v6M180 640v6M180 690v6M300 610v6M298 660v6M296 706v6" stroke="#ddd" strokeWidth="3" />
        <path d="M180 718l16 4-2 10h-12zM280 750l16 2-2 10h-12zM362 652l10-4-2 8z" fill="#fff" stroke="#111" strokeWidth="5" />
        <path d="M178 502L236 455 300 470 302 560 160 530Z" fill="#b7ada5" stroke="#000" strokeWidth="3" />
        <path d="M163 528L285 564 283 580 160 545Z" fill="#ffff20" stroke="#000" strokeWidth="4" />
        <path d="M164 537L284 573" stroke="#000" strokeWidth="4" strokeDasharray="34 5" />
    </g>
);

const insides = [
    <>
        <path d="M200 490l40-70M208 500l44-70M245 505l36-60M262 508l26-40" stroke="#1a1a1a" strokeWidth="4" />
        <path d="M215 488L250 450 262 480 246 505z" fill="#a39b95" />
        <path d="M250 404l16-6 24 8v20l-16 22-24-6-8-18z" fill="#6a6a6a" stroke="#000" strokeWidth="4" />
        <path d="M246 440l34 20M240 462l30 8M272 400v70" stroke="#111" strokeWidth="6" />
    </>,
    <>
        <path d="M226 474l56 10-4 14-62-10z" fill="#c9bdb5" stroke="#222" strokeWidth="4" />
        <path d="M222 494v74M278 500v80" stroke="#8f8078" strokeWidth="9" />
        <path d="M232 530l10-18 34 10v48l-44-8z" fill="#241a1a" />
        <path d="M236 545l30 8M240 560l24-6" stroke="#c9bdb5" strokeWidth="4" />
    </>,
    <>
        <path d="M200 450l40-40 50 14v40z" fill="#b7ada5" stroke="#333" strokeWidth="3" />
        <path d="M196 450l70 24M205 440l50 36M230 425l20 55M215 480l60-20M245 432l30 30" stroke="#1c1410" strokeWidth="4" />
        <path d="M240 508l25-16 34 10-8 20-40 2zM262 526l8 18" stroke="#000" strokeWidth="4" fill="#f5ee10" />
    </>,
    <>
        <path d="M225 505L262 420 292 428 268 510zM238 498l34-66" stroke="#222" strokeWidth="4" fill="#aaa29c" />
        <path d="M216 392v66M240 396v40M262 400l30 10" stroke="#888" strokeWidth="6" />
    </>,
    <>
        <path d="M222 505L252 440 288 450 264 510zM236 498l28-54" stroke="#222" strokeWidth="4" fill="#aaa29c" />
        <path d="M240 385v60M258 390v50" stroke="#777" strokeWidth="6" />
        <path d="M236 446l50-34" stroke="#333" strokeWidth="4" />
    </>,
    null,
    <>
        <path d="M212 418l16-20 60 6 14 30-30 6-50-8z" fill="#ffee10" stroke="#000" strokeWidth="4" />
        <path d="M232 440l22-24 34 30M226 464l66 14M256 430v40M236 480l50-14" stroke="#1a1010" strokeWidth="5" />
        <path d="M254 420v26" stroke="#e01818" strokeWidth="6" />
    </>,
];

const Station = ({ at, index }) => {
    const yellow = index === 0 || index === 3 || index === 4;
    return (
        <g transform={place(at)}>
            <path d="M330 295L392 215 390 330 345 470 316 530 312 395Z" fill={yellow ? '#f4f07e' : '#f0f0f0'} />
            <path d="M392 215V330" stroke="#000" strokeWidth="4" />
            <path d="M185 360L312 395 310 560 175 520Z" fill="#fafafa" />
            {yellow && <path d="M214 370L246 380 212 470Z" fill="#f4f07e" />}
            <path d="M214 500L246 420 300 430 300 560 176 520Z" fill="#b7ada5" />
            <Cabinet />
            <path d="M278 190L390 222 332 305 278 290Z" fill={yellow ? '#fdfdfd' : '#bdbdbd'} />
            <path d="M262 205L262 290 215 280Z" fill={yellow ? '#f4f07e' : '#fff'} />
            {index === 4 && <path d="M262 195l22 6v90l-22-6zM290 210l30 10-4 86-26-8z" fill="#a99e96" stroke="#555" strokeWidth="3" />}
            <path d="M272 184L394 216" stroke="#000" strokeWidth="18" />
            <path d="M274 184L208 275M394 216L330 300" stroke="#000" strokeWidth="16" />
            {index !== 4 && <path d="M273 184V290" stroke="#000" strokeWidth="24" />}
            {insides[index]}
            <path d="M190 360L186 528" stroke="#000" strokeWidth="24" />
            <path d="M310 390L308 570" stroke="#000" strokeWidth="22" />
            <path d="M208 392V488M299 486V535" stroke="#000" strokeWidth="11" />
            <path d="M208 394V486M299 488V532" stroke="#f5ee50" strokeWidth="6" />
            <g stroke="#000" strokeWidth="4" strokeLinejoin="round">
                <path d="M198 273L328 306 322 324 190 291Z" fill="#30f4f4" />
                <path d="M190 291L322 324 313 396 186 362Z" fill="#00ffff" />
                <path d="M328 306V382L313 396 322 324Z" fill="#00e0e4" />
                <path d="M248 328L298 342V371L248 357Z" fill="#808080" />
            </g>
            {[[203, 320, '#222'], [222, 326, '#186018'], [202, 338, '#e8d810'], [221, 343, '#c01818'], [200, 355, '#222'], [220, 361, '#a01414']].map(([x, y, fill]) => (
                <circle key={`${x}-${y}`} cx={x} cy={y} r="5" fill={fill} stroke="#000" strokeWidth="3" />
            ))}
            <Lamp />
        </g>
    );
};

const OpenStation = ({ at }) => (
    <g transform={place(at)}>
        <Cabinet />
        <path d="M250 420L350 430 350 470 302 560 178 502Z" fill="#b7ada5" />
        <path d="M240 290L342 312V440L262 412 230 430Z" fill="#f2f3f8" />
        <path d="M163 528L285 564 283 580 160 545Z" fill="#ffff20" stroke="#000" strokeWidth="4" />
        <path d="M164 537L284 573" stroke="#000" strokeWidth="4" strokeDasharray="34 5" />
        <path d="M233 240V440M348 300V470" stroke="#000" strokeWidth="20" />
        <path d="M256 320V430" stroke="#c2c7e6" strokeWidth="8" />
        <path d="M376 230V350" stroke="#000" strokeWidth="12" />
        <path d="M232 282L345 312 376 255" stroke="#000" strokeWidth="18" />
        <path d="M240 236L350 268 340 300 232 272Z" fill="#1a1a1a" />
        <path d="M246 268l14 4M300 290l34 8M262 244l12 20" stroke="#e8f4f4" strokeWidth="6" />
        <path d="M256 195L381 228 363 272 233 233Z" fill="#90ffff" stroke="#000" strokeWidth="4" />
        <ellipse cx="321" cy="256" rx="14" ry="12" fill="#5d6d78" stroke="#1878a8" strokeWidth="4" />
        <path d="M298 282l8-14 12 6-8 15z" fill="#a81410" />
        <path d="M290 296l8-14 12 6-8 15z" fill="#b0a418" />
        <ellipse cx="289" cy="304" rx="11" ry="10" fill="#18a018" stroke="#030" strokeWidth="2" />
        <path d="M288 350v66" stroke="#222" strokeWidth="16" />
        <path d="M280 376h16M280 392h16M310 330l-6 60" stroke="#888" strokeWidth="3" />
        <circle cx="286" cy="354" r="9" fill="#fff" stroke="#222" strokeWidth="4" />
        <path d="M200 490l4-40 28-32 12 4-6 22-22 18-6 36z" fill="#f7ee10" stroke="#000" strokeWidth="4" />
        <path d="M215 470l30-25 30 10M240 495l20-40M205 505l12-20 20 8M285 520l4-42M270 500l40-10" stroke="#1c1410" strokeWidth="6" />
        <path d="M262 484l38 10" stroke="#e01818" strokeWidth="5" />
        <path d="M258 455l16-6 8 12-16 8z" fill="#8a4a20" />
    </g>
);

const Model = () => (
    <svg
        viewBox="240 157 960 799"
        preserveAspectRatio="xMidYMid meet"
        className="absolute inset-0 size-full"
        fill="none"
        role="img"
        aria-label="开关线总装"
    >
        <g shapeRendering="crispEdges">
            {rackSpots.map((spot, i) => (
                <g key={spot[0]}>
                    <Rack at={spot} last={i === 7} />
                    {i === 5 && <OpenStation at={stationSpots[5]} />}
                    {i !== 5 && i < 7 && <Station at={stationSpots[i]} index={i} />}
                </g>
            ))}
        </g>
        {/* axis triad */}
        <path d="M291.500 888V868" stroke="#1b5e1b" strokeWidth="5" />
        <path d="M291.500 859l6 11q-6 4-12 0z" fill="#2d8a2d" stroke="#1b5e1b" />
        <path d="M292 888l24 7" stroke="#d01c1c" strokeWidth="5" />
        <path d="M326 898l-12-8q-3 5 0 10z" fill="#e03030" stroke="#a01010" />
        <path d="M291 888l-9 14" stroke="#1a1a9c" strokeWidth="5" />
        <path d="M277 910l1-10q5-1 8 4z" fill="#2020d8" stroke="#10108a" />
        <g fontFamily="Liberation Serif, serif" fontSize="12">
            <text x="287" y="858" fill="#0a8a0a">Y</text>
            <text x="324" y="903" fill="#ee1010">X</text>
            <text x="271" y="918" fill="#1010ee">Z</text>
        </g>
    </svg>
);

/* ---------- view toolbar & task pane ---------- */

const ViewToolbar = () => (
    <div className="relative flex justify-center pt-[2px]">
        <div className="flex h-[26px] items-center gap-1.5">
            <button type="button" aria-label="整屏显示全图">
                <Svg>
                    <path d="M7 12l-5 6" stroke="#5a9dbb" strokeWidth="4" strokeLinecap="round" />
                    <circle cx="12" cy="7.500" r="6.200" fill="#f4f8fa" stroke="#666" strokeWidth="1.300" />
                    <path d="M12 3v2M12 10v2M7.500 7.500h2M14.500 7.500h2" stroke="#333" strokeWidth="1.800" />
                </Svg>
            </button>
            <button type="button" aria-label="局部放大">
                <Svg>
                    <path d="M8 1.500h10.500v14H14" stroke="#444" strokeDasharray="3 2" />
                    <path d="M6 13l-4 5" stroke="#5a9dbb" strokeWidth="3.500" strokeLinecap="round" />
                    <circle cx="11" cy="8.500" r="6" fill="#dde9ef" stroke="#777" strokeWidth="1.300" />
                </Svg>
            </button>
            <button type="button" aria-label="上一视图">
                <Svg>
                    <path d="M1 13l4-4L16 2l3 3-7 8-6 4-4-1z" fill="#d0d0d0" stroke="#666" />
                    <path d="M5 9l4 5M11 5l4 4" stroke="#777" />
                    <path d="M9 15l5-4v3h6v3h-6v3z" fill="#2f8bb3" />
                </Svg>
            </button>
            <button type="button" aria-label="剖面视图">
                <SectionIcon />
            </button>
            <button type="button" aria-label="动态注解视图">
                <Svg>
                    <path d="M1 16l4-5L16 3l3 3-8 9-6 4z" fill="#ccc" stroke="#777" />
                    <path d="M8 1h7l-4 4h3L4 13l3-6H3z" fill="#f8c51c" stroke="#a55d0a" strokeWidth=".8" />
                    <path d="M11 19l3.500-9 3.500 9M12.500 16h5" stroke="#2a7fa6" strokeWidth="1.600" />
                </Svg>
            </button>
            <button type="button" aria-label="视图定向" className="flex items-center gap-1">
                <Svg>
                    <path d="M1 7l6-6h12v12l-6 6M7 1v6M13 7l6-6M13 13h6" stroke="#444" />
                    <rect x="1.500" y="7" width="11.500" height="12" fill="#66b2d4" stroke="#1b5876" />
                </Svg>
                <Caret className="text-[#888]" />
            </button>
            <button type="button" aria-label="显示样式" className="ml-1 flex items-center gap-1">
                <Svg>
                    <path d="M2 4l7-3 8 2v12l-7 4-8-3z" fill="#82c4e0" stroke="#456" />
                    <path d="M2 4l8 2 7-3M10 6v13" stroke="#456" />
                    <path d="M10 6l7-3v12l-7 4z" fill="#e8eef1" stroke="#456" />
                    <path d="M3 3.500L9 1.500l7 1.700-6 2z" fill="#dceef6" />
                </Svg>
                <Caret className="text-[#888]" />
            </button>
            <div className="flex h-[26px] border border-[#8d8d8d]">
                <button type="button" aria-label="隐藏/显示项目" className="flex w-[25px] items-center justify-center bg-[#b9b9bb]">
                    <Svg>
                        <path d="M1 10q9-9 18 0-9 8-18 0z" fill="#eee" stroke="#333" strokeWidth="1.200" />
                        <circle cx="10" cy="9.500" r="4.200" fill="#444" />
                        <circle cx="11.500" cy="8.500" r="1.200" fill="#fff" />
                    </Svg>
                </button>
                <button type="button" aria-label="隐藏/显示选项" className="flex w-[13px] items-center justify-center border-l border-[#8d8d8d]">
                    <Caret className="text-[#777]" />
                </button>
            </div>
            <button type="button" aria-label="编辑外观">
                <Svg>
                    <Ball cx={9} cy={9} r={8} />
                    <path d="M9 19l1-4 7-7 3 3-7 7z" fill="#f2dc8a" stroke="#654" />
                </Svg>
            </button>
            <button type="button" aria-label="应用布景" className="flex items-center gap-1">
                <Svg>
                    <path d="M1 10h18v9H1z" fill="#444" />
                    <path d="M2 12h3v3H2zM2 16h3v2H2zM15 12h3v3h-3zM15 16h3v2h-3zM8 16h4v2H8z" fill="#eee" />
                    <Ball cx={10} cy={8} r={7.4} />
                </Svg>
                <Caret className="text-[#888]" />
            </button>
            <button type="button" aria-label="视图设定" className="ml-0.5 flex items-center gap-1">
                <Svg>
                    <rect x="1.500" y="2.500" width="17" height="11" fill="#d8dbe2" stroke="#555" strokeWidth="1.500" />
                    <path d="M10 14v3M5 17.500h10" stroke="#555" strokeWidth="2" />
                </Svg>
                <Caret className="text-[#888]" />
            </button>
        </div>
    </div>
);

const taskTabs = [
    {
        id: '资源',
        icon: (
            <Svg>
                <path d="M4 9v9.500h12V9l-6-6z" fill="#fff" stroke="#333" />
                <path d="M8.500 18.500v-6h4v6" stroke="#333" />
                <path d="M1 11l9-9 9 9" stroke="#12415a" strokeWidth="3.600" />
                <path d="M1.500 10.500L10 2l8.500 8.500" stroke="#3d98c0" strokeWidth="1.800" />
            </Svg>
        ),
    },
    {
        id: '设计库',
        icon: (
            <Svg>
                <path d="M3.500 5l4 2v11.500l-4-3zM7.500 7l3.500-1v11.500l-3.500 1M11 6.500l3-1v11.500l-3 1zM14 6l3-1.500v11L14 17" fill="#f0f0f0" stroke="#333" />
                <path d="M3.500 5l3-2.500 2 1 2.500-1.500 2 1 2-1L17 4.500l-3 1.500-3 .500-3.500.500z" fill="#fff" stroke="#333" />
            </Svg>
        ),
    },
    {
        id: '文件探索器',
        icon: (
            <Svg>
                <path d="M1 18V2.500h5l1.500 2H17V8" fill="#bbb" stroke="#333" />
                <path d="M1 18.500L6 8h14l-5 10.500z" fill="#eee" stroke="#333" />
            </Svg>
        ),
    },
    {
        id: '视图调色板',
        icon: (
            <Svg>
                <rect x="1.500" y="2.500" width="17" height="15" fill="#fff" stroke="#333" />
                <path d="M3.500 5h8v2.500h-8zM13.500 5h3v2.500h-3zM6 10h4v2h2v3H3.500v-3H6z" fill="#f6c915" stroke="#553c00" />
                <path d="M14 10.500h4.500v7H14z" fill="#999" stroke="#555" />
            </Svg>
        ),
    },
    {
        id: '外观',
        icon: (
            <Svg>
                <Ball />
            </Svg>
        ),
    },
    { id: '自定义属性', icon: <ListIcon /> },
    {
        id: '论坛',
        icon: (
            <Svg>
                <path d="M1.500 3.500h11v8H6l-2.500 3v-3h-2z" fill="#4298be" stroke="#12415a" />
                <path d="M8.500 8.500h10v7h-1V18l-3-2.500h-6z" fill="#f4f4f4" stroke="#444" />
            </Svg>
        ),
    },
];

const TaskPane = () => (
    <div className="absolute right-0 top-[29px] flex w-[33px] flex-col border-l border-t border-[#8a8a8a]">
        {taskTabs.map((tab, i) => (
            <button
                key={tab.id}
                type="button"
                aria-label={tab.id}
                className={`flex h-[30px] items-center justify-center border-b border-[#8a8a8a] ${i === 0 ? 'bg-[#f7f7f7]' : 'bg-[#d2d2d2]'}`}
            >
                {tab.icon}
            </button>
        ))}
    </div>
);

/* ---------- bottom bars ---------- */

const BottomTabs = () => (
    <div className="flex h-[21px] border-y border-[#8a8a8a] bg-[#f7f7f7] pl-[2px] text-[17px] leading-[19px] text-black">
        <div className="flex w-[82px] border-t border-black bg-[#a9a9bf] p-px">
            {['M5 3v10M13 3l-6 5 6 5z', 'M12 3L6 8l6 5z', 'M5 3l6 5-6 5z', 'M4 3l6 5-6 5zM12 3v10'].map((d, i) => (
                <button key={d} type="button" aria-label={`标签导航 ${i + 1}`} className="flex w-5 items-center justify-center border border-[#8686a0]">
                    <Svg className="size-4" box="0 0 16 16">
                        <path d={d} fill="#8585a0" stroke="#8585a0" strokeWidth="1.500" />
                    </Svg>
                </button>
            ))}
        </div>
        <button type="button" className="w-[60px] border-r border-[#8a8a8a]">
            模型
        </button>
        <button type="button" className="w-[77px] whitespace-nowrap border-r border-[#8a8a8a] bg-[#d2d2d2] text-[16px]">
            3D 视图
        </button>
        <button type="button" className="w-[108px] whitespace-nowrap border-r border-[#8a8a8a] bg-[#d2d2d2] pr-3 text-[16px]">
            运动算例 1
        </button>
    </div>
);

const StatusBar = () => (
    <footer className="flex h-[22px] items-center border-b border-[#a0a0a0] bg-[#f7f7f7] pl-px text-[15px] leading-5 text-black">
        <span className="flex-1 whitespace-nowrap text-[16px]">SOLIDWORKS Premium 2017 x64 版</span>
        <span className="border-r border-[#ccc] pr-1.5">完全定义</span>
        <span className="border-r border-[#ccc] px-[4px]">大型装配体模式</span>
        <span className="border-r border-[#ccc] px-[4px]">在编辑 装配体</span>
        <span className="h-5 w-4 border-r border-[#ccc]" />
        <button type="button" className="ml-[34px] flex items-center gap-5">
            MMGS
            <span className="rotate-180">
                <Caret />
            </span>
        </button>
        <button type="button" aria-label="标签" className="ml-[68px] mr-3">
            <Svg>
                <path d="M2 8l3-5 9-1 5 6-7 9-7-4z" fill="#ddd" stroke="#444" strokeWidth="1.300" />
                <path d="M2 8l10 5 7-5M12 13v4" stroke="#444" />
                <circle cx="9" cy="6.500" r="2.200" stroke="#444" />
            </Svg>
        </button>
        <Svg className="size-3 self-end" box="0 0 12 12">
            <path d="M9 1h2v2H9zM5 5h2v2H5zM9 5h2v2H9zM1 9h2v2H1zM5 9h2v2H5zM9 9h2v2H9z" fill="#b5b5b5" />
        </Svg>
    </footer>
);

const App = () => (
    <div className="flex min-h-screen flex-col overflow-hidden border-l border-r border-l-[#3550a0] border-r-[#a8a8a8] bg-[#f7f7f7] font-['Open_Sans','Noto_Sans_CJK_SC',sans-serif]">
        <TitleBar />
        <Ribbon />
        <main className="flex flex-1 flex-col bg-[radial-gradient(ellipse_85%_62%_at_5%_0%,#ffffff_45%,transparent),linear-gradient(177deg,#eceef4,#dee1eb_40%,#e4e6ef_50%,#fcfcfd_68%,#ffffff_80%,#f6f7fa)]">
            <TabRow />
            <div className="flex flex-1">
                <FeatureTree />
                <section className="relative min-w-0 flex-1">
                    <Model />
                    <ViewToolbar />
                    <TaskPane />
                </section>
            </div>
        </main>
        <BottomTabs />
        <StatusBar />
    </div>
);

export default App;
